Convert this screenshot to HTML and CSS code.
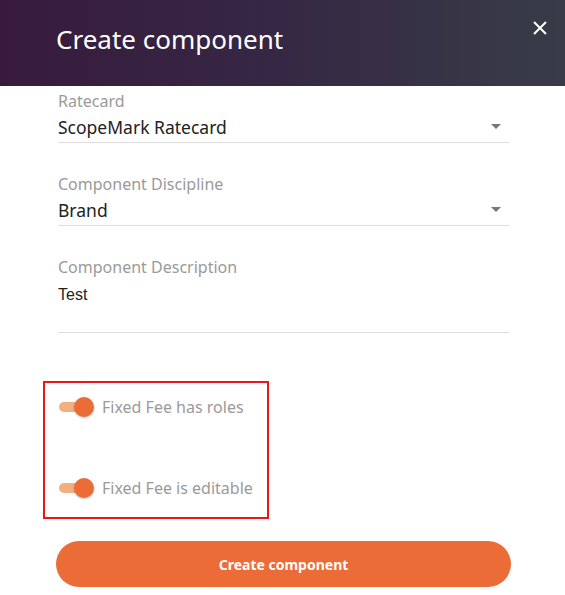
FILE: index.html
```html
<!DOCTYPE html>
<html>
<head>
<meta charset="utf-8">
<link rel="stylesheet" href="styles.css">
</head>
<body>
<div class="modal">
  <header class="head">
    <h1 class="title">Create component</h1>
    <button class="close" aria-label="Close">
      <svg width="14" height="14" viewBox="0 0 14 14"><path d="M1 1L13 13M13 1L1 13" stroke="#fff" stroke-width="2" fill="none"/></svg>
    </button>
  </header>
  <div class="body">
    <div class="field">
      <label class="label">Ratecard</label>
      <div class="select"><span class="value">ScopeMark Ratecard</span><span class="caret"></span></div>
    </div>
    <div class="field">
      <label class="label">Component Discipline</label>
      <div class="select"><span class="value">Brand</span><span class="caret"></span></div>
    </div>
    <div class="field">
      <label class="label">Component Description</label>
      <div class="textarea"><span class="text">Test</span></div>
    </div>
    <div class="toggles">
      <div class="toggle-row"><span class="switch"><span class="knob"></span></span><span class="tlabel">Fixed Fee has roles</span></div>
      <div class="toggle-row"><span class="switch"><span class="knob"></span></span><span class="tlabel">Fixed Fee is editable</span></div>
    </div>
    <button class="submit">Create component</button>
  </div>
</div>
</body>
</html>
```
FILE: styles.css
```css
* { box-sizing: border-box; }
html, body { margin: 0; padding: 0; background: #fff; }
body { font-family: "Noto Sans", "Open Sans", sans-serif; width: 565px; height: 595px; overflow: hidden; }
.head {
  height: 86px;
  background: linear-gradient(90deg, #381a3c 0%, #352844 50%, #383c47 100%);
  display: flex;
  align-items: flex-start;
  justify-content: space-between;
  padding: 0 18px 0 56px;
}
.title {
  margin: 21px 0 0 0;
  font-weight: 400;
  font-size: 26px;
  color: #fff;
  letter-spacing: 0;
}
.close {
  background: none; border: 0; padding: 0; margin-top: 21px; width: 14px; height: 14px; cursor: pointer;
  display: flex;
}
.body { padding: 5px 56px 0 58px; }
.field { display: flex; flex-direction: column; }
.label { color: #9a9a9a; font-size: 16px; line-height: 20px; font-weight: 400; }
.select {
  display: flex; align-items: center; justify-content: space-between;
  border-bottom: 1px solid #dcdcdc;
  height: 32px; padding-right: 8px;
}
.value { font-size: 17.5px; color: #222; }
.caret { width: 0; height: 0; border-left: 5px solid transparent; border-right: 5px solid transparent; border-top: 5px solid #777; }
.field + .field { margin-top: 31px; }
.textarea { height: 56px; border-bottom: 1px solid #dcdcdc; padding-top: 6px; }
.text { font-family: "Liberation Sans", Arial, sans-serif; font-size: 16px; color: #222; }
.toggles {
  margin: 48px 0 0 -15px;
  width: 226px; height: 138px;
  border: 2px solid #f01616;
  padding: 14px 0 0 14px;
  display: flex; flex-direction: column; gap: 61px;
}
.toggle-row { display: flex; align-items: center; gap: 11px; height: 20px; }
.switch { position: relative; width: 32px; height: 10px; border-radius: 5px; background: #f3b07e; }
.knob { position: absolute; right: -3px; top: -5px; width: 20px; height: 20px; border-radius: 50%; background: #ec6c37; box-shadow: 0 1px 2px rgba(0,0,0,0.25); }
.tlabel { color: #9a9a9a; font-size: 16px; font-weight: 400; }
.submit {
  margin: 22px 0 0 -2px;
  width: 455px; height: 46px;
  border: 0; border-radius: 23px;
  background: #ec6c37; color: #fff;
  font-family: "Noto Sans", sans-serif; font-weight: 700; font-size: 14px;
  display: block;
}
```
